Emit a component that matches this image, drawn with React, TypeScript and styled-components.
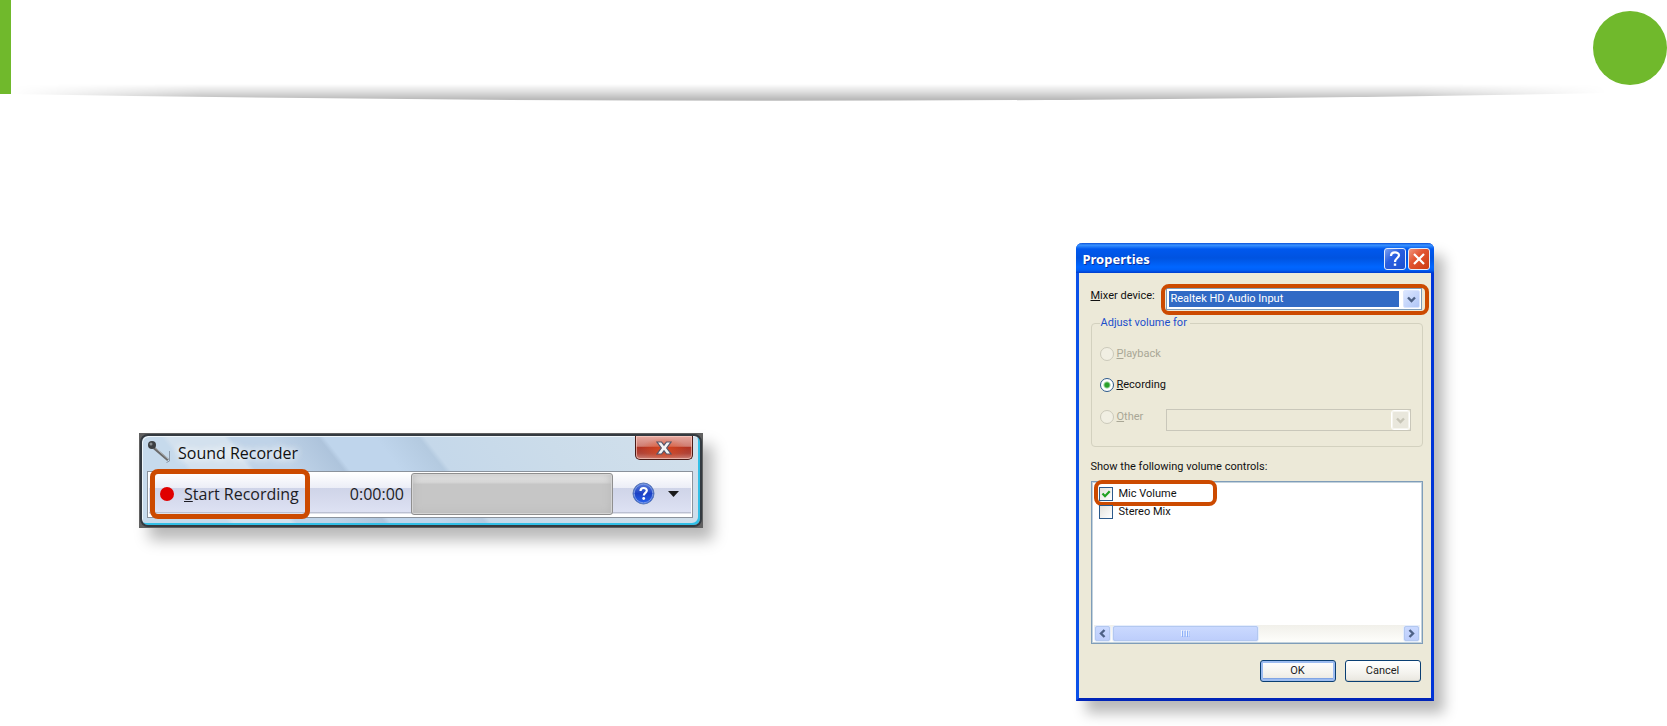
import React from "react";
import styled, { createGlobalStyle, css } from "styled-components";

const GlobalStyle = createGlobalStyle`
  *, *::before, *::after { box-sizing: border-box; }
  body { margin: 0; background: #fff; }
  button, input, select { font: inherit; margin: 0; }
`;

const GREEN = "#70b92c";
const ACCENT = "#cc4a00";

const Page = styled.div`
  min-height: 100vh;
  background: #fff;
`;

const Header = styled.header`
  position: relative;
  display: flex;
  justify-content: flex-end;
  height: 94px;
  padding-top: 11px;
  border-left: 11px solid ${GREEN};
`;

const PageBadge = styled.div`
  width: 74px;
  height: 74px;
  border-radius: 50%;
  background: ${GREEN};
`;

const HeaderShadow = styled.svg`
  position: absolute;
  left: 0;
  top: 82px;
  width: calc(100% - 60px);
  height: 20px;
`;

const Main = styled.main`
  display: grid;
  grid-template-columns: 842fr 825fr;
  justify-items: center;
  align-items: start;
  padding: 149px 0 24px;
`;

const windowShadow = css`
  box-shadow: 10px 12px 14px rgba(0, 0, 0, 0.28);
`;

/* Orange frame that marks the part of the window being explained. */
const Highlight = styled.span<{ $inset: string; $weight: number }>`
  position: absolute;
  inset: ${(p) => p.$inset};
  border: ${(p) => p.$weight}px solid ${ACCENT};
  border-radius: 8px;
  pointer-events: none;
`;

/* ---------- Sound Recorder ---------- */

const RecorderFrame = styled.section`
  width: 564px;
  margin-top: 190px;
  padding: 1px;
  background: #606060;
  font: 16px/20px "Open Sans", sans-serif;
  color: #1c1c24;
  ${windowShadow}
`;

const RecorderWindow = styled.div`
  padding: 0 7px 7px 5px;
  border: 2px solid #343a40;
  border-radius: 8px;
  background: linear-gradient(52deg, #c6daec 0 14%, #d3e1ee 15% 24%, #bfd3e8 25% 31%, #aec4dc 39%, #bfd5ec 40% 48%, #b4cae0 55%, #c5d8ea 56%, #cbdcea 75%, #d2e0ec);
  box-shadow: inset -2px -2px 0 #32bfe6, inset 1px 1px 0 #eef6fb;
`;

const RecorderTitleBar = styled.header`
  display: flex;
  align-items: flex-start;
  height: 35px;
`;

const MicIcon = styled.svg`
  width: 24px;
  height: 24px;
  margin: 4px 7px 0 0;
`;

const RecorderTitle = styled.h2`
  flex: 1;
  margin: 7px 0 0;
  font: inherit;
  color: #111;
  text-shadow: 0 0 8px #fff, 0 0 8px #fff;
`;

const RecorderClose = styled.button`
  display: flex;
  align-items: center;
  justify-content: center;
  width: 58px;
  height: 24px;
  padding: 0;
  border: 1px solid #4a1a16;
  border-top: 0;
  border-radius: 0 0 5px 5px;
  background: radial-gradient(ellipse at 50% 60%, rgba(235, 80, 30, 0.7), transparent 60%),
    linear-gradient(#e6a9a0, #cf7d72 45%, #b23322 48%, #b04438 75%, #cc8076);
  box-shadow: inset 0 0 0 1px rgba(255, 215, 205, 0.6);
`;

const RecorderBar = styled.div`
  display: flex;
  align-items: center;
  height: 47px;
  padding: 0 12px 2px 0;
  border: 2px solid #fff;
  outline: 1px solid #8a929c;
  outline-offset: -1px;
  background: linear-gradient(#fff, #eceef7 34%, #cfd4e8 35%, #dde1f3 90%, #b9bed0 92%, #fff 96%);
`;

const StartSlot = styled.div`
  position: relative;
  width: 162px;
`;

const StartButton = styled.button`
  display: flex;
  align-items: center;
  gap: 10px;
  width: 100%;
  padding: 0 0 0 11px;
  border: 0;
  background: none;
  color: inherit;
  white-space: nowrap;
`;

const RecordDot = styled.span`
  flex: none;
  width: 14px;
  height: 14px;
  border-radius: 50%;
  background: #e00000;
`;

const Elapsed = styled.time`
  width: 62px;
  margin-left: 40px;
`;

const LevelMeter = styled.div`
  width: 203px;
  height: 42px;
  margin-right: 19px;
  border: 1px solid #8f8f8f;
  border-radius: 3px;
  background: linear-gradient(#ececec, #d8d8d8 20%, #c6c6c6 26%, #c6c6c6);
  box-shadow: inset 0 0 0 1px #d4d4d4, inset 0 0 10px #b4b4b4;
`;

const HelpButton = styled.button`
  display: flex;
  margin-right: 13px;
  padding: 0;
  border: 0;
  background: none;
`;

const MenuArrow = styled.button`
  display: flex;
  padding: 0;
  border: 0;
  background: none;
`;

/* ---------- Properties dialog ---------- */

const Dialog = styled.section`
  width: 358px;
  border: 3px solid #0034d8;
  border-top: 0;
  border-left-color: #0a50e8;
  border-bottom-color: #0024b8;
  border-radius: 6px 6px 0 0;
  background: #ece9d8;
  font: 11px/16px Roboto, sans-serif;
  color: #111;
  ${windowShadow}
`;

const DialogTitleBar = styled.header`
  display: flex;
  align-items: center;
  gap: 2px;
  height: 30px;
  margin: 0 -3px;
  padding: 2px 4px 0 7px;
  border-radius: 6px 6px 0 0;
  background: linear-gradient(#0a4fd8, #3a93ff 7%, #0058ee 20%, #0053e0 50%, #0066ff 80%, #0060f8 90%, #003ccc);
`;

const DialogTitle = styled.h2`
  flex: 1;
  margin: 0;
  font: bold 13px/20px "Noto Sans", sans-serif;
  color: #fff;
  text-shadow: 1px 1px 0 #0a2f9a;
`;

const CaptionButton = styled.button<{ $tone: "blue" | "red" }>`
  display: flex;
  align-items: center;
  justify-content: center;
  width: 22px;
  height: 22px;
  padding: 0;
  border: 1px solid #e4ecfb;
  border-radius: 3px;
  background: ${(p) =>
    p.$tone === "blue"
      ? "linear-gradient(135deg, #7ba0f0, #2a5fe0 40%, #1c4fd0)"
      : "linear-gradient(135deg, #f0937c, #e25532 40%, #cc3a10)"};
`;

const DialogBody = styled.div`
  padding: 13px 8px 16px 12px;
`;

const DeviceRow = styled.div`
  display: flex;
  align-items: flex-start;
  justify-content: space-between;
  padding: 2px 1px 0 0;
`;

const ComboBox = styled.div<{ $disabled?: boolean }>`
  position: relative;
  width: ${(p) => (p.$disabled ? 245 : 256)}px;
  height: 22px;
`;

const ComboSelect = styled.select`
  appearance: none;
  width: 100%;
  height: 100%;
  padding: 0 24px 0 4px;
  border: 1px solid #7f9db9;
  border-radius: 0;
  background: linear-gradient(#316ac5, #316ac5) 2px 2px / calc(100% - 24px) 16px no-repeat #fff;
  color: #fff;
  opacity: 1;

  &:disabled {
    border-color: #c9c7ba;
    background: #ece9d8;
  }
`;

const ComboArrow = styled.span<{ $disabled?: boolean }>`
  position: absolute;
  top: 2px;
  right: 2px;
  display: flex;
  align-items: center;
  justify-content: center;
  width: 17px;
  height: 18px;
  border: 1px solid ${(p) => (p.$disabled ? "#f6f5ee" : "#dbe5fd")};
  border-radius: 2px;
  outline: ${(p) => (p.$disabled ? "1px solid #fff" : "none")};
  background: ${(p) => (p.$disabled ? "#e9e7dc" : "linear-gradient(135deg, #dbe6ff, #b0c6f7)")};
  pointer-events: none;
`;

const Group = styled.fieldset`
  min-width: 0;
  height: 132px;
  margin: 5px 0 0;
  padding: 15px 11px 0 8px;
  border: 1px solid #d3d1bf;
  border-radius: 4px;
`;

const GroupTitle = styled.legend`
  padding: 0 3px 0 1px;
  color: #1c4fcc;
`;

const OptionRow = styled.div<{ $height: number }>`
  display: flex;
  align-items: flex-start;
  justify-content: space-between;
  height: ${(p) => p.$height}px;
`;

const Option = styled.label<{ $disabled?: boolean }>`
  display: flex;
  align-items: center;
  gap: 3px;
  color: ${(p) => (p.$disabled ? "#a9a796" : "#111")};
`;

const Radio = styled.input`
  appearance: none;
  width: 14px;
  height: 14px;
  border: 1px solid #2c5a8c;
  border-radius: 50%;
  background: radial-gradient(circle, #2aa02a 0 2px, #fff 4px);

  &:disabled {
    border-color: #cbc9ba;
    background: #f1efe3;
  }
`;

const ListLabel = styled.p`
  margin: 12px 0 6px;
`;

const ControlList = styled.div`
  display: flex;
  flex-direction: column;
  height: 163px;
  padding: 2px 2px 1px;
  border: 1px solid #7f9db9;
  outline: 1px solid #c3d2dc;
  outline-offset: -2px;
  background: #fff;
`;

const Items = styled.ul`
  flex: 1;
  margin: 0;
  padding: 2px 0 0 5px;
  list-style: none;
`;

const Item = styled.li`
  position: relative;
  height: 18px;
`;

const ItemLabel = styled.label`
  display: inline-flex;
  align-items: center;
  gap: 6px;
`;

const CheckBox = styled.span`
  position: relative;
  display: flex;
  width: 14px;
  height: 14px;
`;

const CheckInput = styled.input`
  appearance: none;
  width: 14px;
  height: 14px;
  border: 1px solid #2c5a8c;
  background: linear-gradient(135deg, #e4e2dc, #fff);
`;

const CheckMark = styled.svg`
  position: absolute;
  inset: 2px;
  pointer-events: none;
`;

const ScrollTrack = styled.div`
  display: flex;
  gap: 1px;
  height: 17px;
  background: linear-gradient(#f1f0ea, #fefefb);
`;

const ScrollPiece = styled.button<{ $width: number }>`
  display: flex;
  align-items: center;
  justify-content: center;
  width: ${(p) => p.$width}px;
  height: 17px;
  padding: 0;
  border: 1px solid #e6eefc;
  border-radius: 3px;
  outline: 1px solid #b3c8f0;
  outline-offset: -2px;
  background: linear-gradient(#cbdaff, #bccdfb);

  &:last-child {
    margin-left: auto;
  }
`;

const Actions = styled.footer`
  display: flex;
  justify-content: flex-end;
  gap: 9px;
  padding: 16px 2px 0 0;
`;

const ActionButton = styled.button<{ $default?: boolean }>`
  width: 76px;
  height: 22px;
  padding: 0;
  border: 1px solid #0a3f73;
  border-radius: 3px;
  background: linear-gradient(#fff, #f4f3ee 60%, #e9e7df);
  box-shadow: ${(p) => (p.$default ? "inset 0 0 0 2px #9dbcf0, inset 0 -1px 0 2px #80a4e4" : "inset 0 -1px 0 #d4d0c4")};
  color: #222;
`;

const Chevron = ({ color, turn = 0 }: { color: string; turn?: number }) => (
  <svg width="9" height="9" viewBox="0 0 9 9" aria-hidden="true">
    <path
      d="M1 2.5 4.5 6 8 2.5"
      fill="none"
      stroke={color}
      strokeWidth="2.4"
      transform={`rotate(${turn} 4.5 4.5)`}
    />
  </svg>
);

function SoundRecorder() {
  return (
    <RecorderFrame aria-label="Sound Recorder">
      <RecorderWindow>
        <RecorderTitleBar>
          <MicIcon viewBox="0 0 24 24" aria-hidden="true">
            <path d="M7 8 21 20" stroke="#6a6a6a" strokeWidth="2.600" />
            <path d="M8 7.500 21 19" stroke="#b5b9bd" strokeWidth="1" />
            <path d="M22.500 11v10l-3 1.500" fill="none" stroke="#8a98a8" />
            <circle cx="5" cy="5" r="4" fill="#3c3f42" />
            <circle cx="4" cy="4" r="1.500" fill="#85898c" />
          </MicIcon>
          <RecorderTitle>Sound Recorder</RecorderTitle>
          <RecorderClose aria-label="Close">
            <svg width="16" height="14" viewBox="0 0 16 14" aria-hidden="true">
              <path
                d="M1 1h4.500L8 4.200 10.500 1H15l-4.300 6L15 13h-4.500L8 9.800 5.500 13H1l4.300-6z"
                fill="#f4f4f4"
                stroke="#56566a"
                strokeWidth="1.200"
              />
            </svg>
          </RecorderClose>
        </RecorderTitleBar>
        <RecorderBar>
          <StartSlot>
            <StartButton>
              <RecordDot />
              <span>
                <u>S</u>tart Recording
              </span>
            </StartButton>
            <Highlight $inset="-15px 0 -15px 1px" $weight={5} />
          </StartSlot>
          <Elapsed>0:00:00</Elapsed>
          <LevelMeter />
          <HelpButton aria-label="Help">
            <svg width="23" height="23" viewBox="0 0 23 23" aria-hidden="true">
              <defs>
                <linearGradient id="help" x1="0" y1="0" x2="0" y2="1">
                  <stop offset="0" stopColor="#5d82dc" />
                  <stop offset="0.5" stopColor="#1c40c4" />
                  <stop offset="1" stopColor="#2864f0" />
                </linearGradient>
              </defs>
              <circle cx="11.500" cy="11.500" r="10.500" fill="url(#help)" stroke="#5a78b4" />
              <circle cx="11.500" cy="11.500" r="9.300" fill="none" stroke="#7c9ae4" strokeWidth="1" />
              <path
                d="M8.500 9c0-4 6.300-3.800 6.300-.4 0 2.200-3 2.400-3 5"
                fill="none"
                stroke="#fff"
                strokeWidth="2.200"
              />
              <circle cx="11.700" cy="16.500" r="1.400" fill="#fff" />
            </svg>
          </HelpButton>
          <MenuArrow aria-label="More options">
            <svg width="11" height="6" viewBox="0 0 11 6" aria-hidden="true">
              <path d="M0 0h11L5.500 6z" fill="#1a1a1a" />
            </svg>
          </MenuArrow>
        </RecorderBar>
      </RecorderWindow>
    </RecorderFrame>
  );
}

function VolumeItem({ id, label, checked }: { id: string; label: string; checked?: boolean }) {
  return (
    <Item>
      <ItemLabel htmlFor={id}>
        <CheckBox>
          <CheckInput id={id} type="checkbox" defaultChecked={checked} />
          {checked && (
            <CheckMark width="10" height="10" viewBox="0 0 10 10" aria-hidden="true">
              <path d="M1.500 4.500 4 7.200 8.700 2.200" fill="none" stroke="#21a121" strokeWidth="2.200" />
            </CheckMark>
          )}
        </CheckBox>
        {label}
      </ItemLabel>
      {checked && <Highlight $inset="-6px 203px -2px -5px" $weight={4} />}
    </Item>
  );
}

function PropertiesDialog() {
  return (
    <Dialog aria-label="Properties">
      <DialogTitleBar>
        <DialogTitle>Properties</DialogTitle>
        <CaptionButton $tone="blue" aria-label="Help">
          <svg width="14" height="16" viewBox="0 0 14 16" aria-hidden="true">
            <path d="M3 5c0-5 8-4.500 8-.7C11 7 7 7.200 7 11" fill="none" stroke="#fff" strokeWidth="2.200" />
            <path d="M5.800 12.500h2.400v2.300H5.800z" fill="#fff" />
          </svg>
        </CaptionButton>
        <CaptionButton $tone="red" aria-label="Close">
          <svg width="14" height="14" viewBox="0 0 14 14" aria-hidden="true">
            <path d="M2 2l10 10M12 2 2 12" stroke="#fff" strokeWidth="2.200" />
          </svg>
        </CaptionButton>
      </DialogTitleBar>
      <DialogBody>
        <DeviceRow>
          <label htmlFor="device">
            <u>M</u>ixer device:
          </label>
          <ComboBox>
            <ComboSelect id="device" defaultValue="realtek">
              <option value="realtek">Realtek HD Audio Input</option>
            </ComboSelect>
            <ComboArrow>
              <Chevron color="#4d6185" />
            </ComboArrow>
            <Highlight $inset="-4px -7px -5px -5px" $weight={4} />
          </ComboBox>
        </DeviceRow>
        <Group>
          <GroupTitle>Adjust volume for</GroupTitle>
          <OptionRow $height={31}>
            <Option $disabled>
              <Radio type="radio" name="mode" disabled />
              <span>
                <u>P</u>layback
              </span>
            </Option>
          </OptionRow>
          <OptionRow $height={32}>
            <Option>
              <Radio type="radio" name="mode" defaultChecked />
              <span>
                <u>R</u>ecording
              </span>
            </Option>
          </OptionRow>
          <OptionRow $height={22}>
            <Option $disabled>
              <Radio type="radio" name="mode" disabled />
              <span>
                <u>O</u>ther
              </span>
            </Option>
            <ComboBox $disabled>
              <ComboSelect aria-label="Other" disabled />
              <ComboArrow $disabled>
                <Chevron color="#c6c4b6" />
              </ComboArrow>
            </ComboBox>
          </OptionRow>
        </Group>
        <ListLabel>Show the following volume controls:</ListLabel>
        <ControlList>
          <Items>
            <VolumeItem id="mic" label="Mic Volume" checked />
            <VolumeItem id="stereo" label="Stereo Mix" />
          </Items>
          <ScrollTrack>
            <ScrollPiece $width={17} aria-label="Scroll left">
              <Chevron color="#4d6185" turn={90} />
            </ScrollPiece>
            <ScrollPiece $width={147} aria-label="Scroll position">
              <svg width="9" height="7" viewBox="0 0 9 7" aria-hidden="true">
                <path d="M.5 0v6M3 0v6M5.500 0v6M8 0v6" stroke="#eef4fe" />
                <path d="M1.500 1v6M4 1v6M6.500 1v6M9 1v6" stroke="#8cb0f8" />
              </svg>
            </ScrollPiece>
            <ScrollPiece $width={17} aria-label="Scroll right">
              <Chevron color="#4d6185" turn={-90} />
            </ScrollPiece>
          </ScrollTrack>
        </ControlList>
        <Actions>
          <ActionButton $default>OK</ActionButton>
          <ActionButton>Cancel</ActionButton>
        </Actions>
      </DialogBody>
    </Dialog>
  );
}

export default function App() {
  return (
    <Page>
      <GlobalStyle />
      <Header>
        <PageBadge />
        <HeaderShadow viewBox="0 0 1596 20" preserveAspectRatio="none" aria-hidden="true">
          <defs>
            <linearGradient id="fall" x1="0" y1="0" x2="0" y2="20" gradientUnits="userSpaceOnUse">
              <stop offset="0.1" stopColor="#000" stopOpacity="0" />
              <stop offset="0.5" stopColor="#000" stopOpacity="0.13" />
              <stop offset="0.85" stopColor="#000" stopOpacity="0.27" />
            </linearGradient>
            <linearGradient id="ends">
              <stop offset="0" stopColor="#000" />
              <stop offset="0.12" stopColor="#fff" />
              <stop offset="0.88" stopColor="#fff" />
              <stop offset="1" stopColor="#000" />
            </linearGradient>
            <mask id="edge">
              <rect width="1596" height="20" fill="url(#ends)" />
            </mask>
          </defs>
          <path d="M0 0H1596V11Q798 26 0 12z" fill="url(#fall)" mask="url(#edge)" />
        </HeaderShadow>
      </Header>
      <Main>
        <SoundRecorder />
        <PropertiesDialog />
      </Main>
    </Page>
  );
}
